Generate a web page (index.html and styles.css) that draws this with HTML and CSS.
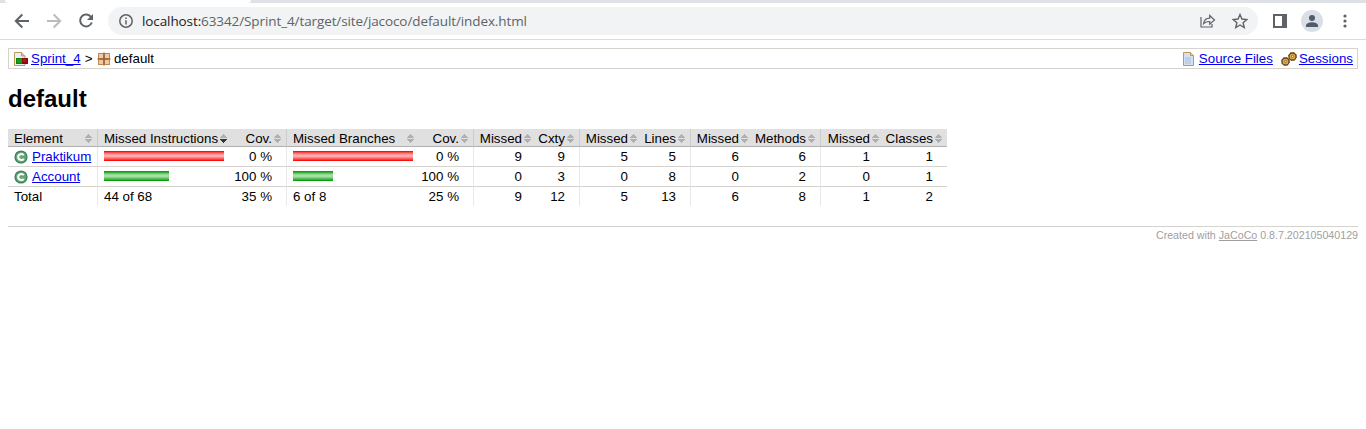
FILE: index.html
```html
<!DOCTYPE html>
<html lang="en">
<head>
<meta charset="utf-8">
<title>default</title>
<link rel="stylesheet" href="styles.css">
</head>
<body>
<svg class="defs" width="0" height="0">
  <symbol id="up" viewBox="0 0 7 9"><path d="M3 0h1v1h1v1h1v1h1v1H0V3h1V2h1V1h1z"/></symbol>
  <symbol id="down" viewBox="0 0 7 9"><path d="M0 5h7v1H6v1H5v1H4v1H3V8H2V7H1V6H0z"/></symbol>
  <symbol id="cls" viewBox="0 0 14 14"><circle cx="7" cy="7" r="6.600" fill="#3d8555"/><circle cx="7" cy="7" r="5.300" fill="#69a37a"/><path d="M9.800 5.200C8.600 3.500 4.200 3.500 4.200 7s4.400 3.500 5.600 1.800" fill="none" stroke="#fff" stroke-width="2"/></symbol>
  <symbol id="gear" viewBox="0 0 9 9"><circle cx="4.500" cy="4.500" r="3.500" fill="#e5b242" stroke="#6b451b" stroke-width="1.300"/><circle cx="4.500" cy="4.500" r="4" fill="none" stroke="#6b451b" stroke-width=".9" stroke-dasharray="1.600 1.540"/><circle cx="4.500" cy="4.500" r="1.200" fill="#f3dfae" stroke="#765025" stroke-width=".8"/></symbol>
</svg>
<header class="browser">
  <div class="tabstrip"><span class="tab"></span></div>
  <div class="toolbar">
    <svg class="nav back" viewBox="0 0 16 16"><path d="M15 8H2M8.300 1.500L1.800 8l6.500 6.500"/></svg>
    <svg class="nav forward" viewBox="0 0 16 16"><path d="M1 8h13M7.700 1.500L14.200 8l-6.500 6.500"/></svg>
    <svg class="nav reload" viewBox="0 0 16 16"><path d="M13.200 4.200A6 6 0 1 0 13.800 9.500"/><path class="solid" d="M15 1v6H9z"/></svg>
    <div class="omnibox">
      <svg class="info" viewBox="0 0 14 14"><circle cx="7" cy="7" r="6.200"/><path d="M7 6.200v4.300M7 3.500v1.500"/></svg>
      <span class="url"><b>localhost:</b>63342/Sprint_4/target/site/jacoco/default/index.html</span>
      <svg class="share" viewBox="0 0 16 14"><path d="M1 3v10h11v-3"/><path d="M3.600 9.700C4 6.500 6 4.300 9.700 4.200V1.500L14.500 6 9.700 10.200V7.500C7 7.500 5 8.200 3.600 9.700z"/></svg>
      <svg class="star" viewBox="0 0 14 14"><path d="M7 1.300l1.700 4 4.300.4-3.300 2.800 1 4.200L7 10.500l-3.700 2.200 1-4.200L1 5.700l4.300-.4z"/></svg>
    </div>
    <svg class="panel" viewBox="0 0 14 14"><path d="M0 0h14v14H0zM2 2v10h7V2z" fill-rule="evenodd"/></svg>
    <span class="avatar"><svg viewBox="0 0 14 14"><circle cx="7" cy="4" r="3"/><path d="M1 13v-1.500C1 9.300 4.500 8.200 7 8.200s6 1.100 6 3.300V13z"/></svg></span>
    <svg class="dots" viewBox="0 0 4 14"><circle cx="2" cy="2" r="1.600"/><circle cx="2" cy="7" r="1.600"/><circle cx="2" cy="12" r="1.600"/></svg>
  </div>
</header>
<main class="report">
  <nav class="breadcrumb">
    <svg class="icon" viewBox="0 0 16 16"><path d="M1.500 1.500h7l3.500 3.500v9.500H1.500z" fill="#e9eef8" stroke="#b99b56"/><path d="M8.500 1.500V5H12" fill="#dfc88c" stroke="#b99b56"/><path d="M3 7h6v6H3z" fill="#157b16"/><path d="M4 8h5v4H4z" fill="#10a510"/><path d="M9 7h6v6H9z" fill="#8b0c10"/><path d="M10 8h3v3h-3z" fill="#bd1018"/></svg>
    <a class="project" href="#">Sprint_4</a><span class="sep">&gt;</span>
    <svg class="icon package" viewBox="0 0 16 16"><path d="M2 2h12v12H2z" fill="#c08a58"/><path d="M3 3h4v4H3zM9 3h4v4H9zM3 9h4v4H3zM9 9h4v4H9z" fill="#edcba0"/><path d="M8 1.500v13M1.500 8h13" stroke="#8f532a"/></svg>
    <span class="current">default</span>
    <span class="links">
      <svg class="icon" viewBox="0 0 16 16"><path d="M1.500 1.500h7l3 3v10h-10z" fill="#d5e0f2" stroke="#b99b56"/><path d="M8.500 1.500v3h3" fill="#e2cc94" stroke="#b99b56"/><path d="M3 6h6v7H3z" fill="#bfcfe9"/></svg>
      <a class="source" href="#">Source Files</a>
      <svg class="icon" viewBox="0 0 16 16"><use href="#gear" x="0" y="6" width="9" height="9"/><use href="#gear" x="7" y="1" width="9" height="9"/></svg>
      <a class="sessions" href="#">Sessions</a>
    </span>
  </nav>
  <h1>default</h1>
  <table class="coverage">
    <colgroup><col class="w-element"><col class="w-instr"><col class="w-cov"><col class="w-branch"><col class="w-cov"><col class="w-missed"><col class="w-cxty"><col class="w-missed"><col class="w-lines"><col class="w-missed"><col class="w-methods"><col class="w-missed2"><col class="w-classes"></colgroup>
    <thead><tr>
      <td>Element<svg class="sort"><use href="#up"/><use href="#down"/></svg></td>
      <td class="edge">Missed Instructions<svg class="sort"><use href="#up"/><use class="active" href="#down"/></svg></td>
      <td class="num">Cov.<svg class="sort"><use href="#up"/><use href="#down"/></svg></td>
      <td class="edge">Missed Branches<svg class="sort"><use href="#up"/><use href="#down"/></svg></td>
      <td class="num">Cov.<svg class="sort"><use href="#up"/><use href="#down"/></svg></td>
      <td class="num edge">Missed<svg class="sort"><use href="#up"/><use href="#down"/></svg></td>
      <td class="num">Cxty<svg class="sort"><use href="#up"/><use href="#down"/></svg></td>
      <td class="num edge">Missed<svg class="sort"><use href="#up"/><use href="#down"/></svg></td>
      <td class="num">Lines<svg class="sort"><use href="#up"/><use href="#down"/></svg></td>
      <td class="num edge">Missed<svg class="sort"><use href="#up"/><use href="#down"/></svg></td>
      <td class="num">Methods<svg class="sort"><use href="#up"/><use href="#down"/></svg></td>
      <td class="num edge">Missed<svg class="sort"><use href="#up"/><use href="#down"/></svg></td>
      <td class="num">Classes<svg class="sort"><use href="#up"/><use href="#down"/></svg></td>
    </tr></thead>
    <tbody>
      <tr><td><svg class="cls"><use href="#cls"/></svg><a href="#">Praktikum</a></td><td class="edge"><i class="bar red" style="width:120px"></i></td><td class="num">0 %</td><td class="edge"><i class="bar red" style="width:120px"></i></td><td class="num">0 %</td><td class="num edge">9</td><td class="num">9</td><td class="num edge">5</td><td class="num">5</td><td class="num edge">6</td><td class="num">6</td><td class="num edge">1</td><td class="num">1</td></tr>
      <tr><td><svg class="cls"><use href="#cls"/></svg><a href="#">Account</a></td><td class="edge"><i class="bar green" style="width:65px"></i></td><td class="num">100 %</td><td class="edge"><i class="bar green" style="width:40px"></i></td><td class="num">100 %</td><td class="num edge">0</td><td class="num">3</td><td class="num edge">0</td><td class="num">8</td><td class="num edge">0</td><td class="num">2</td><td class="num edge">0</td><td class="num">1</td></tr>
      <tr class="total"><td>Total</td><td class="edge">44 of 68</td><td class="num">35 %</td><td class="edge">6 of 8</td><td class="num">25 %</td><td class="num edge">9</td><td class="num">12</td><td class="num edge">5</td><td class="num">13</td><td class="num edge">6</td><td class="num">8</td><td class="num edge">1</td><td class="num">2</td></tr>
    </tbody>
  </table>
  <footer>Created with <a href="#">JaCoCo</a> 0.8.7.202105040129</footer>
</main>
</body>
</html>
```
FILE: styles.css
```css
* { box-sizing: border-box; }
body { margin: 0; background: #fff; color: #000; font: 13.333px/15px "Liberation Sans", Arial, sans-serif; }
svg { display: block; flex: none; }
.defs { position: absolute; }
a { color: #00e; }

.browser { height: 40px; border-bottom: 1px solid #dadce0; }
.tabstrip { height: 3px; background: #dee1e6; padding-left: 5px; }
.tab { display: block; width: 246px; height: 3px; background: #fff; border-radius: 0 0 3px 3px; }
.toolbar { display: flex; align-items: center; height: 36px; padding-left: 14px; }
.nav { width: 16px; height: 16px; margin-right: 16px; fill: none; stroke: #5f6368; stroke-width: 2; }
.forward { stroke: #babcbe; }
.reload { margin-right: 14px; }
.reload .solid { fill: #5f6368; stroke: none; }
.omnibox { display: flex; align-items: center; width: 1150px; height: 28px; padding-left: 11px; border-radius: 14px; background: #f1f3f4; }
.info { width: 14px; height: 14px; fill: none; stroke: #5f6368; stroke-width: 1.5; }
.url { width: 1058px; margin-left: 9px; font: 13.5px/20px "Open Sans", "Noto Sans", sans-serif; letter-spacing: -0.1px; color: #5f6368; white-space: nowrap; }
.url b { font-weight: 400; color: #202124; }
.share { width: 16px; height: 14px; fill: none; stroke: #5f6368; stroke-width: 1.2; }
.star { width: 16px; height: 16px; margin-left: 16px; fill: none; stroke: #5f6368; stroke-width: 1.2; }
.panel { width: 14px; height: 14px; margin-left: 15px; fill: #5f6368; }
.avatar { display: grid; place-items: center; width: 22px; height: 22px; margin-left: 14px; border-radius: 50%; background: #dadfe6; }
.avatar svg { width: 14px; height: 14px; fill: #505b70; }
.dots { width: 4px; height: 14px; margin-left: 20px; fill: #5f6368; }

.report { padding: 8px 8px 0; }
.breadcrumb { display: flex; align-items: center; height: 21px; padding: 0 4px; border: 1px solid #d6d3ce; white-space: nowrap; }
.icon { width: 16px; height: 16px; }
.project { margin-left: 2px; }
.sep { margin-left: 4px; }
.package { margin-left: 4px; }
.current { margin-left: 1.5px; }
.links { display: flex; align-items: center; margin-left: auto; }
.source { margin: 0 8px 0 1px; }
.sessions { margin-left: 2px; }
h1 { margin: 16px 0; font-size: 24px; line-height: 28px; font-weight: 700; }

.coverage { table-layout: fixed; width: 939px; border-collapse: separate; border-spacing: 0; }
.w-element { width: 89px; } .w-instr { width: 135px; } .w-cov { width: 54px; }
.w-branch { width: 133px; } .w-missed { width: 63px; } .w-cxty { width: 43px; }
.w-lines { width: 48px; } .w-methods { width: 67px; } .w-missed2 { width: 64px; } .w-classes { width: 63px; }
.coverage td { height: 20px; padding: 0 0 0 6px; border-bottom: 1px solid #d6d3ce; white-space: nowrap; vertical-align: middle; }
.coverage thead td { position: relative; height: 18px; padding-top: 2px; background: #e0e0e0; border-bottom-color: #b0b0b0; }
.coverage .edge { border-left: 1px solid #e8e8e8; }
.coverage thead .edge { border-left-color: #ccc; }
.coverage .num { padding: 0 14px 0 0; text-align: right; }
.coverage thead .num { padding-top: 2px; }
.coverage .total td { height: 19px; border-bottom: 0; }
.sort { position: absolute; right: 5px; top: 5px; width: 7px; height: 9px; fill: #b0b0b0; }
.active { fill: #443322; }
.cls { display: inline-block; width: 14px; height: 14px; margin-right: 4px; vertical-align: -3px; }
.bar { display: block; height: 10px; margin-bottom: 2px; }
.red { background: linear-gradient(#ff0d0d 10%, #ff4848 10% 20%, #ff7373 20% 30%, #ff9a9a 30% 40%, #ffabab 40% 60%, #ff8585 60% 70%, #ff6060 70% 80%, #ff3a3a 80% 90%, #ff0d0d 90%); }
.green { background: linear-gradient(#08a008 10%, #35b135 10% 20%, #68c568 20% 30%, #94d694 30% 40%, #a8dea8 40% 60%, #84cf84 60% 70%, #5cc05c 70% 80%, #3ab23a 80% 90%, #08a008 90%); }

footer { margin-top: 20px; padding-top: 2px; border-top: 1px solid #d6d3ce; font-size: 10.667px; line-height: 13px; color: #a0a0a0; text-align: right; }
footer a { color: #a0a0a0; }
```
